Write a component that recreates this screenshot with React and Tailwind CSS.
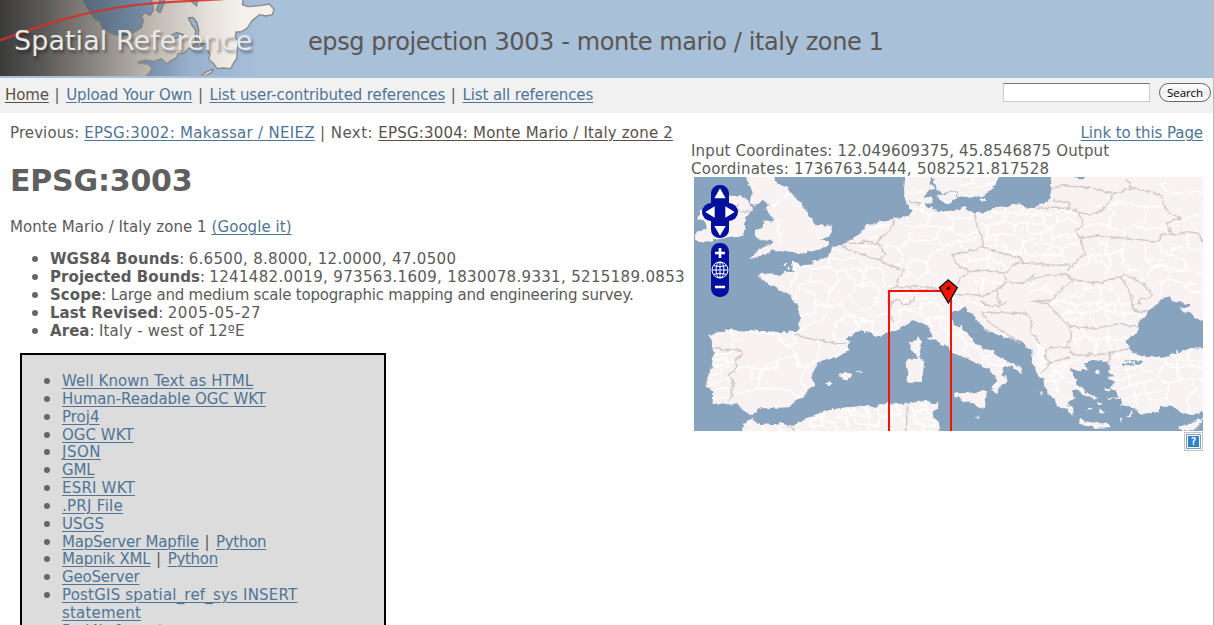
import React from "react";

const link = "text-[#4f7496] underline decoration-1 underline-offset-[2px]";
const visited = "text-[#5a5048] underline decoration-1 underline-offset-[2px]";

function A({ children, className = "", seen }) {
  return (
    <a href="#" className={`${seen ? visited : link} ${className}`}>
      {children}
    </a>
  );
}

function Sep() {
  return <span className="whitespace-pre tracking-[0.9px]"> | </span>;
}

function HeaderArt() {
  return (
    <svg viewBox="0 0 900 228" className="block h-[76px] w-[300px]" aria-hidden="true">
      <defs>
        <linearGradient id="landShade" x1="0" x2="900" y1="0" y2="0" gradientUnits="userSpaceOnUse">
          <stop offset="0" stopColor="#3b3b3a" />
          <stop offset="0.15" stopColor="#5d5b59" />
          <stop offset="0.3" stopColor="#86827e" />
          <stop offset="0.5" stopColor="#bdb7b0" />
          <stop offset="0.7" stopColor="#e6e1db" />
          <stop offset="0.8" stopColor="#f4f0ec" />
        </linearGradient>
        <linearGradient id="seaShade" x1="240" x2="900" y1="0" y2="0" gradientUnits="userSpaceOnUse">
          <stop offset="0" stopColor="#536577" />
          <stop offset="0.3" stopColor="#758da6" />
          <stop offset="0.5" stopColor="#98b1cd" />
          <stop offset="0.85" stopColor="#a9c0d9" />
          <stop offset="1" stopColor="#a9c0d9" />
        </linearGradient>
      </defs>
      <rect width="900" height="228" fill="url(#seaShade)" />
      <g fill="url(#landShade)" stroke="#8b8a88" strokeWidth="4" strokeLinejoin="round">
        <path d="M-5-5H730L727 14 745 20 780 17 808 12 822 28 817 44 798 48 778 44 756 62 742 84 722 96 708 96 706 112 714 122 712 150 710 176 700 190 692 206 668 204 652 206 640 190 626 178 630 162 618 142 622 130 606 132 598 146 592 128 580 138 566 146 552 160 536 160 526 176 512 182 500 192 484 176 462 184 438 180 414 186 416 190 444 192 456 204 450 216 436 230H-5Z" />
        <path d="M605 226 622 214 640 208 636 216 612 230Z" />
      </g>
      <g fill="url(#seaShade)" stroke="#807f7e" strokeWidth="4" strokeLinejoin="round">
        <path d="M242-5 256 20 270 42 282 58 300 68 306 86 322 96 348 106 384 106 404 96 424 82 430 62 424 50 434 38 450 46 460 30 454-5Z" />
        <path d="M482-5 470 30 480 38 492 10 495-5Z" />
        <path d="M572-5 576 6 590 18 592-5Z" />
        <path d="M565 54 578 52 590 66 596 90 594 112 604 130 590 126 584 110 588 92 574 72Z" />
        <path d="M508 108 530 98 550 104 526 116Z" />
      </g>
      <path d="M0 121C150 66 290 22 480 8 540 4 600 1 670-3" fill="none" stroke="#d52f27" strokeWidth="7" opacity="0.85" />
    </svg>
  );
}

function MapDrawing() {
  return (
    <svg viewBox="0 0 1527 762" className="block h-[254px] w-[509px]" role="img">
      <defs>
        <filter id="rough" x="-30" y="-30" width="1590" height="830" filterUnits="userSpaceOnUse">
          <feTurbulence type="fractalNoise" baseFrequency="0.06" numOctaves="3" seed="4" />
          <feDisplacementMap in="SourceGraphic" scale="15" xChannelSelector="R" yChannelSelector="G" />
        </filter>
      </defs>
      <rect width="1527" height="762" fill="#88a3be" />
      <g filter="url(#rough)">
        {/* continent */}
        <path
          fill="#f8f2f2"
          d="M636-20 630 34 631 54 636 79 648 92 656 106 646 114 633 119 600 124 583 132 558 132 538 142 518 144 510 154 503 166 493 172 468 189 443 204 413 206 410 229 398 239 373 249 353 256 360 262 333 264 318 264 298 252 293 256 300 284 273 284 253 294 228 292 213 287 196 294 203 309 223 319 243 329 263 342 278 344 288 356 300 374 313 389 310 399 318 419 316 449 303 465 278 466 253 465 218 463 168 461 118 459 98 454 78 464 43 474 53 489 60 519 53 569 36 609 38 629 58 639 56 679 93 681 138 684 146 699 168 714 178 709 203 694 288 691 303 669 333 661 338 639 363 624 353 604 358 574 388 549 428 539 463 519 466 494 458 484 488 464 528 466 548 476 563 477 586 464 618 454 648 434 663 431 688 439 703 449 710 464 713 484 733 494 760 511 778 529 808 539 838 554 863 569 888 579 903 599 906 619 893 629 893 644 910 647 918 624 938 619 938 604 923 589 928 569 948 567 968 577 980 589 985 574 963 564 938 552 898 531 903 519 873 519 843 499 823 469 788 449 773 429 773 404 798 399 816 391 823 404 843 414 858 439 878 459 908 474 948 484 978 489 998 509 1016 519 1013 554 1023 574 1028 594 1048 609 1053 639 1068 654 1083 669 1093 689 1118 694 1138 714 1138 694 1118 679 1148 664 1133 644 1148 639 1173 659 1183 654 1168 634 1148 619 1138 594 1126 569 1138 574 1158 584 1168 574 1188 579 1170 560 1198 549 1238 554 1248 565 1243 584 1258 594 1243 604 1263 614 1248 631 1268 644 1273 659 1283 669 1278 684 1308 689 1318 694 1348 714 1393 704 1398 689 1438 689 1468 709 1498 714 1560 690V-20Z"
        />
        {/* Baltic, Black Sea and Marmara */}
        <g fill="#88a3be">
          <path d="M711-20 718 20 733 39 743 54 763 44 788 39 790 56 828 62 868 56 883 44 898 34 925-20H1076L1070 34 1073 62 1053 74 1028 88 1020 94 990 90 978 78 938 90 898 94 878 104 843 109 818 99 808 86 798 99 758 102 738 109 713 94 698 89 688 69 693 54 710 39 724 34 710 19Z" />
          <path d="M1386 384 1403 364 1423 359 1433 369 1468 379 1488 381 1488 389 1458 394 1463 404 1493 409 1503 424 1550 434V514H1488L1448 529 1418 542 1348 539 1318 529 1308 514 1296 497 1308 479 1330 464 1333 434 1358 419 1368 394Z" />
          <path d="M1283 560 1298 550 1318 550 1352 553 1338 563 1308 566Z" />
          <path d="M1140-12H1172V2L1155 8Z" />
          <path d="M1170 559 1196 560 1196 572 1212 564 1230 572 1212 580 1192 578Z" />
        </g>
        {/* islands and North Africa */}
        <g fill="#f8f2f2">
          <path d="M153-20 166 24 176 50 168 79 183 84 203 69 228 84 213 92 223 104 233 124 238 134 208 129 206 154 183 159 183 179 218 194 233 189 238 199 213 204 188 224 166 242 188 239 213 234 233 219 278 222 318 229 358 222 403 209 408 194 378 189 403 179 413 159 413 146 363 144 358 129 338 104 323 79 298 59 283 34 248 19 233-20Z" />
          <path d="M103 59 138 54 158 69 173 89 173 104 153 119 153 154 148 176 108 179 63 189 33 194 3 189 8 164 38 154 33 134 13 124 18 102 60 98Z" />
          <path d="M268 258H276V266H268ZM284 266 290 276 280 276Z" />
          <path d="M686 64 712 58 720 76 698 80ZM730 52 752 58 768 44 788 42 786 64 768 80 738 72ZM856 64 872 66 878 72 866 76 856 70Z" />
          <path d="M643 547 663 544 678 539 690 559 686 594 683 614 663 614 648 619 638 609 640 574 633 554ZM676 477 681 489 680 519 673 539 658 529 646 509 648 494 668 489Z" />
          <path d="M778 647 798 649 828 647 878 642 873 694 843 684 783 659ZM842 716 854 720 850 724Z" />
          <path d="M435 594 456 584 475 594 463 607 443 604ZM398 619 408 612 413 621 403 629ZM483 581 503 584 498 591Z" />
          <path d="M141 780 148 739 168 724 178 719 183 734 203 744 258 739 298 747 338 724 388 704 418 697 458 691 513 686 538 691 578 679 628 681 683 669 708 677 733 679 733 694 716 704 718 719 738 739 730 780Z" />
          <path d="M1156 727 1188 736 1248 741 1248 751 1203 752 1156 741ZM1298 719 1318 699 1308 721ZM1451 749 1488 739 1530 724 1508 754 1468 766Z" />
          <path d="M1158 640 1188 652 1212 664 1200 668 1176 654ZM1204 582H1216V590H1204ZM1232 632 1252 636 1244 644 1232 640ZM1208 676 1224 680 1216 688ZM1240 662H1278V666H1240ZM1180 692H1192V698H1180ZM1216 696 1228 700V706H1216ZM1278 722 1286 724 1280 738ZM1036 640 1048 650 1042 654Z" />
          <path d="M840 412 862 436 854 438ZM866 452 886 464 880 466ZM900 472 940 480 930 484ZM700 482H716V488H700Z" />
        </g>

        {/* regional lines */}
        <g fill="none" stroke="#fff" strokeWidth="5" strokeLinejoin="round">
          <g transform="translate(-12 -6)">
            <path d="M235 95 265 85 285 65 298 50M262 130 270 150 258 165 272 175 270 205" />
            <path d="M310 265 318 295 300 335M340 270 365 285 415 275 425 220M415 275 440 290 490 280 525 290M365 285 360 320 330 330 315 370M360 320 395 320 420 345 410 392M425 250 470 255 500 240M440 290 445 320 420 345M470 290 500 330 525 325M345 345 380 360 370 392M500 330 480 365 500 392M425 220 455 232" />
          </g>
          <g transform="translate(-12 369)">
            <path d="M330 50 370 40 385 10M385 10 420 20 455 10 470 45 500 50 525 60M470 45 440 65 430 90 435 125M365 70 400 60 410 30M365 70 330 90M490 50 505 80 485 95M455 10 460-10" />
            <path d="M125 90 130 120 120 145M130 120 155 118M180 92 220 102 260 100 280 130 300 140 318 125 295 105M260 100 270 120M318 125 310 100M300 140 320 165 265 180 235 195 220 205 150 200 140 210M320 165 325 195 340 205 330 240 345 255 350 280M390 120 385 165 370 190 340 205M265 180 262 205 220 205 205 240 208 265 170 275 130 278M208 265 250 265 300 270 320 290M205 240 180 230 190 205M320 290 345 275M70 165 110 160 130 155M70 180 95 175 110 185 140 180M75 200 100 195 115 205M60 225 90 220 95 240 120 235M95 200 90 220M55 250 75 255 90 240M70 270 100 265 125 270M70 295 115 290M110 160 112 185 120 200" />
            <path d="M175 365 190 385M220 375 230 392M265 370 275 392M300 378 330 392M350 355 370 380 400 375 410 392M400 335 395 360 430 365 440 392M430 328 440 350 470 355 475 392M470 322 490 345 525 340M390 365 420 360M440 350 460 335 500 330M490 345 500 370 525 375M350 370 380 350 410 350" />
          </g>
          <g transform="translate(498 -6)">
            <path d="M140 55 200 50M155 80 200 75M300 30 340 25 370 40M340 25 335 6M370 30 410 20M185 85 190 110 165 100 155 120M190 110 210 120 200 150 150 160 120 140M210 120 245 110 280 130 340 130M280 130 270 165 240 155 200 150M270 165 310 185 350 170M240 155 230 190 250 215 215 235 200 260 160 250 140 270 150 300 120 310M230 190 190 200 150 190 120 220 80 210M250 215 290 200 330 230M150 190 145 165M200 260 205 290 235 310 230 335M205 290 165 320M10 190 50 185M80 210 75 240M5 215 50 215M30 160 60 155 90 150M110 220 130 240 120 270 80 270M0 250 20 275 10 310 40 320 60 350 40 392M20 275 60 280 75 300 70 330M40 320 0 335M70 330 100 335M290 200 340 195 360 180" />
            <path d="M360 120 385 130 400 115 440 110 430 140 380 150 355 145M380 150 385 190 370 200M430 140 465 150 460 180 410 175 385 190M440 110 480 120 525 115M465 150 500 140 525 150M460 180 490 200 525 190M410 175 405 220M490 200 480 235 440 230 430 210 370 215M500 140 505 175 525 180M480 120 490 95M490 200 500 240 525 245M430 95 440 110M400 115 395 100M320 235 330 260 380 250 390 285M380 250 400 230M330 260 300 270M380 250 430 265 440 290M340 325 370 310 400 325 440 320M370 310 365 350M400 325 410 355M100 360 130 350 160 355 170 375 200 365 230 370M130 350 120 385M160 355 190 345M200 365 210 392M290 350 270 392M320 360 330 380 370 392" />
          </g>
          <g transform="translate(498 369)">
            <path d="M0 60 40 65 60 45 85 40M40 65 35 95M0 30 30 25 60 5M100 75 120 60 115 30 140 25 135 0M140 25 180 45 200 55 240 50 270 60M180 45 185 10 215 15M200 55 215 80M240 50 245 85 265 100 260 130M245 85 285 80M265 100 300 105 320 130 350 145M300 105 305 75M320 130 310 160M350 145 370 170 360 190M370 170 400 165M370 170 390 190 410 195 430 200M400 165 420 185M230 10 250 35M290 0 310 25M155 150 170 155M400 100 450 112" />
            <path d="M10 320 30 345 25 392M50 325 60 350 95 345 100 392M80 310 95 345M60 350 50 380 5 375M110 315 125 340 115 360 140 365M95 345 125 340M150 320 165 335 200 330 215 350M165 335 160 365 190 375 185 392M200 330 195 305M160 365 210 355 230 370M0 350 30 345M190 375 230 380M175 320 190 312" />
          </g>
          <g transform="translate(1008 -6)">
            <path d="M0 130 30 110 60 120 90 105 140 115M10 150 45 145 60 160 85 140 110 130 140 145M0 185 30 175 60 160 70 190 110 180 140 185M30 110 45 145M85 140 80 120M70 190 60 215 100 220 130 205 150 205M10 210 35 200 60 215 50 240 10 235M50 240 90 240 110 255 90 268M90 240 100 220M30 175 35 200M110 180 130 205M150 155 190 150 215 145 240 160M240 160 240 130 255 115 240 95 270 82 345 95 350 135 310 150 280 165 240 160M280 165 285 190M345 95 400 95M310 150 350 165 410 155M410 20 390 30 420 55 518 50M430 145 470 130 500 120 518 125M185 90 220 95M110 90 150 120" />
            <path d="M200 182 210 200 230 205 225 240 180 240 175 265 120 285M180 240 205 260 240 280 225 305M240 280 240 235 275 225 290 200M275 225 280 265 300 280 290 300M340 198 350 230 345 250 380 260 420 240 395 225 390 205M345 250 365 275 350 310 330 320M365 275 410 270 440 290 480 285 518 300M420 240 465 255 470 275 440 290M470 175 475 215 518 230M475 215 430 220 420 240M410 270 420 310 390 325 400 355M420 310 460 330 500 325M240 235 225 240M300 280 340 300M460 330 485 355 515 350M150 315 170 340 210 335 250 345 240 325M170 340 150 365 110 360 90 385M210 335 215 370 180 390M250 345 270 375 240 392M0 350 40 340 60 320M0 330 25 320M40 340 70 355" />
          </g>
          <g transform="translate(1008 369)">
            <path d="M50 10 100 5 140 15 200 5 250 15 300 10M90 45 130 35 180 40 210 25 260 40 310 40M130 35 140 15M180 40 190 75M210 25 200 5M260 40 250 15M100 25 130 35M110 60 150 55 160 80M230 45 240 72M280 40 285 70M280 10 270 40M150 55 155 38M310 40 345 55M75 5 95 30M225 5 230 45M175 15 180 40" />
            <path d="M150 85 165 110 130 120 150 145M165 110 200 120 195 160M200 120 230 110 235 85M230 110 260 120 290 110M230 110 245 150M140 85 130 120M260 120 265 150M15 130 40 150 20 165 50 175M10 175 40 180 25 200 45 205M30 130 25 160M35 145 38 200M15 190 50 190M60 210 90 215 100 235 75 245M90 215 110 195M60 195 90 200 110 185M100 235 130 250 155 270M50 240 75 245 85 270 65 275M90 290 125 300M75 200 70 230 50 225M110 195 130 180 155 180" />
            <path d="M260 160 270 185M255 205 290 210 300 230 270 240 255 235M290 210 330 200 345 215 300 230M330 200 345 170M345 215 390 210 385 240 340 245 300 255 300 230M390 210 410 190 400 175M410 190 440 205 450 240 420 250 385 240M440 205 480 195 518 205M420 160 440 180 440 205M480 195 470 165 490 145M265 270 300 255 315 285 280 300M315 285 350 280 340 245M350 280 365 305 340 340M365 305 410 290 420 250M410 290 430 320M450 240 480 235 518 240M480 235 500 270 470 290 480 340M440 150 450 180 510 185M300 165 330 180M315 285 320 320M350 280 400 270M270 185 310 190 330 200M240 170 290 165" />
          </g>
        </g>

        {/* national borders */}
        <g fill="none" stroke="#d3c9cb" strokeWidth="4.5" strokeLinejoin="round">
          <path transform="translate(-12 -6)" d="M455 210 475 225 500 235 525 240M150 85 130 100 155 110 180 108M465 205 520 205" />
          <path transform="translate(-12 369)" d="M72 143 90 148 150 150 158 160 140 180 135 210 118 225 130 250 125 280 118 305M315 100 330 110 370 118 395 120 430 130 470 130M295 378 320 392" />
          <path
            transform="translate(498 -6)"
            d="M145 82 182 86M0 200 50 205 60 190 75 180 100 150 103 135M0 235 30 245 60 255 75 240 60 210 50 205M60 255 75 265 130 285 118 310 105 335 160 335 200 335 235 345M105 335 85 350 85 375 95 392M200 335 205 345 150 345M345 115 350 150 365 180 370 215M275 240 320 230 370 215 400 225 440 240 475 245 495 265 460 270 435 295 400 290 370 285 330 290 300 275 285 262ZM330 290 300 310 290 330M235 345 250 362 320 358 370 362 410 345 435 325 435 295M440 320 480 325 525 300M495 265 525 265M410 345 420 392M85 385 120 375 140 392 165 365"
          />
          <path
            transform="translate(1008 -6)"
            d="M0 265 40 270 115 270 120 280 165 235 150 190 135 170 160 150 145 110 120 100 20 100M70 75 120 85 120 100M65 38 100 32 185 38 245 55 245 70 220 105 180 118 145 112M290 10 305 40 260 52 245 65M305 40 350 48 395 60 400 90 420 115 455 130 410 145 425 175M150 190 200 182 280 190 340 198 385 200 395 180 440 178M443 178 470 170 505 175 518 200M120 280 105 300 140 315 200 325 270 305 300 345 310 390M270 305 290 300 340 325 365 360 350 372 330 370 325 388M0 315 50 300 105 300M130 315 90 345 65 375 0 380"
          />
          <path d="M1008 374 1058 379 1093 414 1128 449 1133 479 1118 509 1068 509 1053 534 1068 559 1040 589M1128 449 1208 454 1268 441 1330 449M1123 509 1138 534 1198 534 1248 529 1308 514M1068 559 1128 539M1248 529 1250 545 1240 560M1310 375 1320 400 1360 405M858 374 878 384 918 389 938 374M863 404 928 409 998 409 1013 434 1008 469 1023 479 1040 500M863 409 888 439 928 464 978 499M638 684V762M588 375 590 415 600 440" />
        </g>
      </g>

      {/* bounds rectangle */}
      <path d="M585 764V342H771V764" fill="none" stroke="#fa1200" strokeWidth="6" />
      {/* marker */}
      <path d="M763 309 790 332 763 378 736 332Z" fill="#fa1200" stroke="#111" strokeWidth="4" />
      <circle cx="763" cy="334" r="5.5" fill="#111" />

      {/* pan and zoom controls */}
      <g fill="#00109c">
        <rect x="51" y="24" width="54" height="159" rx="25" />
        <rect x="24" y="78" width="108" height="54" rx="27" />
        <rect x="51" y="198" width="54" height="162" rx="25" />
      </g>
      <path d="M78 34 95 64H61ZM78 176 61 147H95ZM34 105 62 88V122ZM122 105 94 88V122Z" fill="#fff" />
      <path d="M63 228H93M78 213V243M63 330H93" stroke="#fff" strokeWidth="8" />
      <g fill="none" stroke="#fff" strokeWidth="3">
        <circle cx="78" cy="279" r="24" />
        <ellipse cx="78" cy="279" rx="12" ry="24" />
        <path d="M78 255V303M54 279H102M58 266Q78 272 98 266M58 292Q78 286 98 292" />
      </g>
    </svg>
  );
}

const formats = [
  [["Well Known Text as HTML", "tracking-[0.05px]"]],
  [["Human-Readable OGC WKT", "tracking-[-0.07px]"]],
  [["Proj4", "tracking-[0px]"]],
  [["OGC WKT", "tracking-[0.05px]"]],
  [["JSON", "tracking-[0.5px]"]],
  [["GML", ""]],
  [["ESRI WKT", "tracking-[0.2px]"]],
  [[".PRJ File", "tracking-[0.28px]"]],
  [["USGS", "tracking-[0.1px]"]],
  [["MapServer Mapfile", ""], ["Python", "tracking-[-0.3px]"]],
  [["Mapnik XML", ""], ["Python", "tracking-[-0.3px]"]],
  [["GeoServer", "tracking-[-0.2px]"]],
  [["PostGIS spatial_ref_sys INSERT statement", "tracking-[0.2px]"]],
  [["Proj4js format", ""]],
];

const facts = [
  ["WGS84 Bounds", "6.6500, 8.8000, 12.0000, 47.0500", "tracking-[0.31px]"],
  ["Projected Bounds", "1241482.0019, 973563.1609, 1830078.9331, 5215189.0853", "tracking-[0.33px]"],
  ["Scope", "Large and medium scale topographic mapping and engineering survey.", "tracking-[-0.2px]"],
  ["Last Revised", "2005-05-27", "tracking-[0.65px]"],
  ["Area", "Italy - west of 12ºE", "tracking-[0.17px]"],
];

export default function App() {
  return (
    <div className="h-[625px] w-[1214px] overflow-hidden border-r border-[#bbb] bg-white font-['DejaVu_Sans','Verdana',sans-serif] text-[15px] leading-[18px] tracking-[-0.2px] text-[#5a5a5a]">
      <header className="relative flex h-[78px] bg-[#a9c0d9]">
        <HeaderArt />
        <div className="absolute left-[14px] top-[23px] whitespace-nowrap text-[27px] leading-[36px] tracking-[0.05px] text-[#e8e8e6] [text-shadow:2px_3px_3px_rgba(0,0,0,0.4)]">
          Spatial Reference
        </div>
        <h1 className="ml-2 mt-[24px] whitespace-nowrap text-[24px] leading-[36px] tracking-[-0.4px] text-[#5a5654]">
          epsg projection 3003 - monte mario / italy zone 1
        </h1>
      </header>

      <nav className="flex h-[35px] items-start justify-between bg-[#f1f1f1] pl-[5px] pr-[2px]">
        <div className="whitespace-nowrap pt-[8px] tracking-[-0.11px]">
          <A seen>Home</A>
          <Sep />
          <A>Upload Your Own</A>
          <Sep />
          <A>List user-contributed references</A>
          <Sep />
          <A>List all references</A>
        </div>
        <form className="flex items-center gap-[9px] pt-[5px]">
          <input className="h-[19px] w-[147px] border border-[#ccc] border-t-[#777] bg-white" />
          <button
            type="button"
            className="h-[19px] w-[52px] rounded-full border border-[#666] bg-linear-to-b from-white via-[#eee] to-white font-['Open_Sans',sans-serif] text-[11.5px] font-medium leading-[16px] tracking-[-0.1px] text-black"
          >
            Search
          </button>
        </form>
      </nav>

      <div className="flex">
        <main className="w-[684px] shrink-0 overflow-hidden whitespace-nowrap pl-[10px] pt-[11px]">
          <p>
            <span className="tracking-[0.1px]">Previous: </span>
            <A className="tracking-[0.28px]">EPSG:3002: Makassar / NEIEZ</A>
            <span className="tracking-[0.47px]"> | Next: </span>
            <A seen className="tracking-[0.185px]">
              EPSG:3004: Monte Mario / Italy zone 2
            </A>
          </p>
          <h2 className="mt-[20px] text-[30px] font-bold leading-[38px] text-[#5f5f5f]">EPSG:3003</h2>
          <p className="mt-[18px] tracking-[0.06px]">
            Monte Mario / Italy zone 1 <A>(Google it)</A>
          </p>
          <ul className="mt-[14px]">
            {facts.map(([k, v, spacing]) => (
              <li key={k} className="flex pl-[22px]">
                <span className="mr-[12px] mt-[6px] h-[6px] w-[6px] shrink-0 rounded-full bg-[#666]" />
                <span className={spacing}>
                  <b className="tracking-[0.06px]">{k}</b>
                  <span className="tracking-[-0.2px]">: </span>
                  {v}
                </span>
              </li>
            ))}
          </ul>
          <div className="ml-[10px] mt-[13px] h-[300px] w-[366px] border-2 border-black bg-[#dcdcdc] pt-[18px] leading-[17.85px]">
            <ul>
              {formats.map((row, i) => (
                <li key={i} className="flex pl-[22px]">
                  <span className="mr-[12px] mt-[5px] h-[6px] w-[6px] shrink-0 rounded-full bg-[#666]" />
                  <span className="w-[270px] whitespace-normal">
                    {row.map(([text, spacing], j) => (
                      <React.Fragment key={j}>
                        {j > 0 && <Sep />}
                        <A className={spacing}>{text}</A>
                      </React.Fragment>
                    ))}
                  </span>
                </li>
              ))}
            </ul>
          </div>
        </main>

        <aside className="w-[519px] pl-[7px] pt-[11px]">
          <div className="text-right tracking-[-0.08px]">
            <A>Link to this Page</A>
          </div>
          <div className="whitespace-nowrap">
            <span className="tracking-[0.16px]">Input Coordinates: 12.049609375, 45.8546875 Output</span>
            <br />
            <span className="tracking-[0.25px]">Coordinates: 1736763.5444, 5082521.817528</span>
          </div>
          <div className="-mt-px ml-[3px]">
            <MapDrawing />
          </div>
          <div className="flex justify-end">
            <div className="mt-px h-[19px] w-[19px] border border-[#c4c4c4] bg-white p-px">
              <div className="h-[15px] w-[15px] border border-[#7f9fd0] bg-white p-px">
                <div className="flex h-[11px] w-[11px] items-center justify-center bg-[#3183c8] font-['DejaVu_Sans_Mono',monospace] text-[10px] font-bold leading-none tracking-normal text-white">
                  ?
                </div>
              </div>
            </div>
          </div>
        </aside>
      </div>
    </div>
  );
}
